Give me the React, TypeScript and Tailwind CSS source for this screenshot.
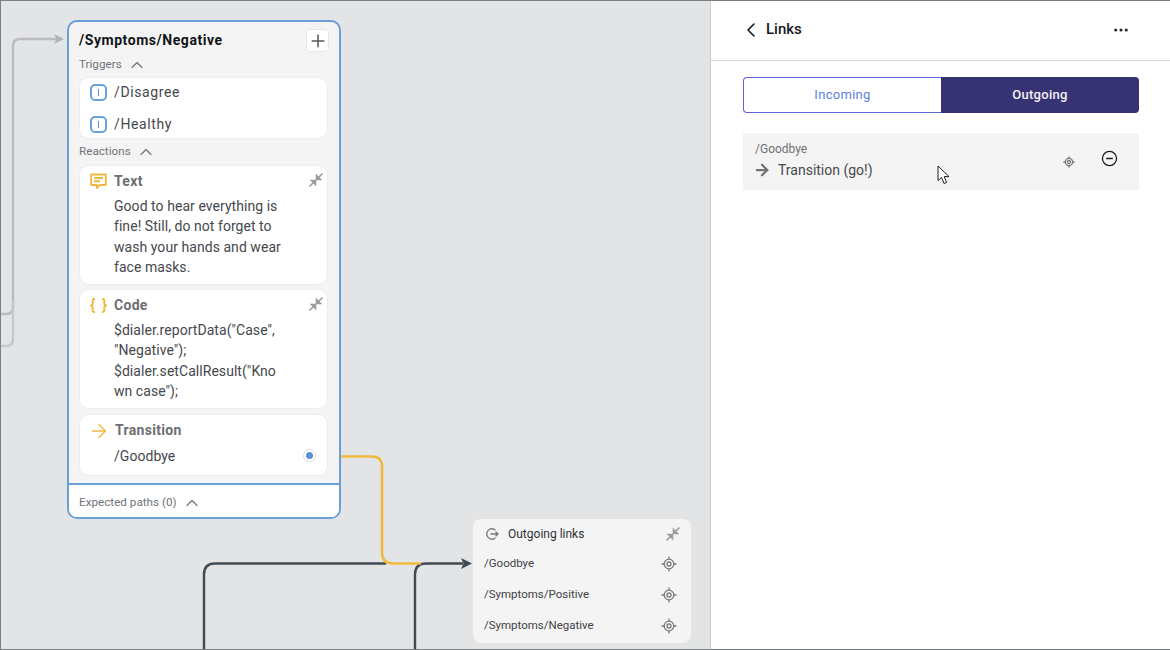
import React from 'react';
import { ChevronUp, Plus, ChevronLeft, MoreHorizontal, ArrowRight, MinusCircle } from 'lucide-react';

const Collapse = () => (
  <svg width="16" height="16" viewBox="0 0 16 16" fill="none" stroke="#9a9da2" strokeWidth="1.6">
    <path d="M1.5 14.5L6.5 9.5M9.5 6.5L14.5 1.5" />
    <path d="M3.5 8.5H7.5V12.5Z" fill="#9a9da2" />
    <path d="M8.5 3.5V7.5H12.5Z" fill="#9a9da2" />
  </svg>
);

const Target = ({ size = 16, color = '#6f7276', stroke = 1.3 }: { size?: number; color?: string; stroke?: number }) => (
  <svg width={size} height={size} viewBox="0 0 16 16" fill="none" stroke={color} strokeWidth={stroke}>
    <circle cx="8" cy="8" r="4.8" />
    <circle cx="8" cy="8" r="2" />
    <path d="M8 0.5V3.2M8 12.8V15.5M0.5 8H3.2M12.8 8H15.5" />
  </svg>
);

const TriggerRow = ({ label }: { label: string }) => (
  <div className="flex h-[32px] items-center gap-[7px] pl-[10px]">
    <div className="flex h-[17px] w-[17px] items-center justify-center rounded-[5px] border-2 border-[#6a9fd8]">
      <div className="h-[7px] w-px bg-[#5b93d1]" />
    </div>
    <span className="text-[14px] tracking-[0.6px] text-[#45484d]">{label}</span>
  </div>
);

const SectionLabel = ({ label }: { label: string }) => (
  <div className="flex items-center gap-[5px] pl-[10px] text-[11.7px] text-[#70747a]">
    <span>{label}</span>
    <ChevronUp size={20} strokeWidth={1.4} className="text-[#70747a]" />
  </div>
);

const ReactionCard = ({ icon, title, lines }: { icon: React.ReactNode; title: string; lines: string[] }) => (
  <div className="relative mx-[10px] mr-[11px] h-[120px] rounded-[10px] border border-[#ececec] bg-white">
    <div className="absolute left-[10px] top-[7px]">{icon}</div>
    <div className="pl-[34px] pt-[6px] text-[14px] font-bold leading-[18px] tracking-[0.3px] text-[#6b6e73]">{title}</div>
    <div className="absolute right-[3px] top-[6px]"><Collapse /></div>
    <div className="mt-[6px] pl-[34px] text-[14px] leading-[20.3px] tracking-[0.05px] text-[#45484d]">
      {lines.map((l) => <div key={l}>{l}</div>)}
    </div>
  </div>
);

const LinkRow = ({ label }: { label: string }) => (
  <div className="flex h-[31px] items-center justify-between pl-[11px] pr-[14px] text-[11.5px] text-[#3f4246]">
    <span>{label}</span>
    <Target size={16} color="#777a7e" />
  </div>
);

const StateCard = () => (
  <div className="absolute left-[66px] top-[19px] flex h-[499px] w-[274px] flex-col overflow-hidden rounded-[10px] border-2 border-[#6a9fd8] bg-[#f4f4f4]">
    <div className="flex h-[30px] shrink-0 items-start justify-between pl-[10px] pr-[10px] pt-[7px]">
      <span className="text-[14px] font-bold leading-[22px] tracking-[0.55px] text-[#111418]">/Symptoms/Negative</span>
      <div className="flex h-[23px] w-[23px] items-center justify-center rounded-[4px] border border-[#e6e6e6] bg-white">
        <Plus size={20} strokeWidth={1.8} className="text-[#55585c]" />
      </div>
    </div>
    <div className="mt-[3px] h-[18px]"><SectionLabel label="Triggers" /></div>
    <div className="ml-[10px] mr-[11px] mt-[4px] h-[62px] rounded-[10px] border border-[#ececec] bg-white">
      <div className="-mt-[2px]">
        <TriggerRow label="/Disagree" />
        <TriggerRow label="/Healthy" />
      </div>
    </div>
    <div className="mt-[3px] h-[18px]"><SectionLabel label="Reactions" /></div>
    <div className="mt-[5px] flex flex-col gap-[4px]">
      <ReactionCard
        title="Text"
        lines={['Good to hear everything is', 'fine! Still, do not forget to', 'wash your hands and wear', 'face masks.']}
        icon={
          <svg width="17" height="17" viewBox="0 0 17 17" fill="none" stroke="#eebb3f" strokeWidth="1.9">
            <path d="M1.2 1.5H15.8V12H9.5L7 15V12H1.2Z" strokeLinejoin="round" />
            <path d="M4 5H13M4 8.3H10" />
          </svg>
        }
      />
      <ReactionCard
        title="Code"
        lines={['$dialer.reportData("Case",', '"Negative");', '$dialer.setCallResult("Kno', 'wn case");']}
        icon={
          <svg width="17" height="17" viewBox="0 0 17 17" fill="none" stroke="#eebb3f" strokeWidth="2">
            <path d="M5 2H4Q2.7 2 2.7 3.4V6.5Q2.7 8 1.2 8.5Q2.7 9 2.7 10.5V13.6Q2.7 15 4 15H5" />
            <path d="M12 2H13Q14.3 2 14.3 3.4V6.5Q14.3 8 15.8 8.5Q14.3 9 14.3 10.5V13.6Q14.3 15 13 15H12" />
          </svg>
        }
      />
      <div className="relative ml-[10px] mr-[11px] mt-[1px] h-[62px] rounded-[10px] border border-[#ececec] bg-white">
        <ArrowRight size={22} strokeWidth={1.6} className="absolute left-[8px] top-[5px] text-[#eebb3f]" />
        <div className="pl-[35px] pt-[6px] text-[14px] font-bold leading-[18px] tracking-[0.3px] text-[#6b6e73]">Transition</div>
        <div className="mt-[7px] pl-[34px] text-[14px] leading-[20px] tracking-[0.05px] text-[#45484d]">/Goodbye</div>
        <div className="absolute right-[11px] top-[34px] flex h-[13px] w-[13px] items-center justify-center rounded-full border border-[#dcdcdc]">
          <div className="h-[7px] w-[7px] rounded-full bg-[#5b93d1]" />
        </div>
      </div>
    </div>
    <div className="mt-[7px] flex-1 border-t-2 border-[#6a9fd8] bg-white">
      <div className="pt-[8px]"><SectionLabel label="Expected paths (0)" /></div>
    </div>
  </div>
);

const Edges = () => (
  <svg className="absolute inset-0" width="710" height="650" fill="none">
    <path d="M0 313H5Q12 313 12 306V45Q12 38 19 38H56" stroke="#b9bbbe" strokeWidth="2.4" />
    <path d="M0 345H5Q12 345 12 338V300" stroke="#c6c8ca" strokeWidth="2.4" />
    <path d="M53 33L63 38L53 43L55.5 38Z" fill="#b0b2b5" />
    <path d="M203 650V573.5Q203 562.5 214 562.5H385" stroke="#424a52" strokeWidth="2.4" />
    <path d="M414 650V573.5Q414 562.5 425 562.5H462" stroke="#424a52" strokeWidth="2.4" />
    <path d="M460 557L471 562.5L460 568L462.5 562.5Z" fill="#424a52" />
    <path d="M339 455.5H371Q381 455.5 381 465.5V551.5Q381 562.5 392 562.5H420" stroke="#eebb3f" strokeWidth="2.6" />
  </svg>
);

const OutgoingLinks = () => (
  <div className="absolute left-[472px] top-[518px] h-[124px] w-[218px] rounded-[8px] bg-[#f4f4f4]">
    <div className="flex h-[29px] items-center pl-[12px] pr-[10px] text-[12px] text-[#2e3135]">
      <svg width="14" height="14" viewBox="0 0 14 14" fill="none" stroke="#77797d" strokeWidth="1.4" className="mr-[9px]">
        <path d="M10.5 3.2A5.2 5.2 0 1 0 10.5 10.8" />
        <path d="M5.5 7H13M10.6 4.8L13 7L10.6 9.2" />
      </svg>
      <span className="flex-1">Outgoing links</span>
      <Collapse />
    </div>
    <LinkRow label="/Goodbye" />
    <LinkRow label="/Symptoms/Positive" />
    <LinkRow label="/Symptoms/Negative" />
  </div>
);

const Sidebar = () => (
  <div className="flex w-[460px] shrink-0 flex-col border-l border-[#c9cbce] bg-white">
    <div className="flex h-[60px] shrink-0 items-center justify-between border-b border-[#d9d9d9] pb-[2px] pl-[28px] pr-[40px]">
      <div className="flex items-center gap-[3px]">
        <ChevronLeft size={24} strokeWidth={1.6} className="text-[#17191c]" />
        <span className="text-[15px] font-medium text-[#17191c]">Links</span>
      </div>
      <MoreHorizontal size={18} strokeWidth={2.2} className="text-[#26282b]" />
    </div>
    <div className="ml-[32px] mr-[31px] mt-[16px] flex h-[36px]">
      <div className="flex flex-1 items-center justify-center rounded-l-[4px] border border-r-0 border-[#5f63d6] bg-white text-[13px] tracking-[0.3px] text-[#5b7fdc]">Incoming</div>
      <div className="flex w-[198px] items-center justify-center rounded-r-[4px] bg-[#373373] text-[13px] font-medium tracking-[0.3px] text-[#f3f3f6]">Outgoing</div>
    </div>
    <div className="relative ml-[32px] mr-[31px] mt-[20px] flex h-[57px] items-start bg-[#f4f4f4] pl-[12px] pr-[21px]">
      <div className="flex-1 pt-[8px]">
        <div className="text-[12px] leading-[16px] text-[#6f7276]">/Goodbye</div>
        <div className="mt-[3px] flex items-center gap-[7px]">
          <ArrowRight size={18} strokeWidth={3} className="-ml-[2px] text-[#6f7276]" />
          <span className="text-[14px] leading-[20px] text-[#45484d]">Transition (go!)</span>
        </div>
      </div>
      <div className="mr-[26px] mt-[23px]"><Target size={12} color="#77797d" stroke={1.7} /></div>
      <MinusCircle size={17} strokeWidth={1.8} className="mt-[17px] text-[#17191c]" />
      {/* mouse pointer */}
      <svg className="absolute left-[194px] top-[32px]" width="14" height="21" viewBox="0 0 14 21" fill="white" stroke="#1c1c1c" strokeWidth="1">
        <path d="M1 1V15.5L4.6 12.4L7 18.5L9.6 17.4L7.2 11.6H12Z" />
      </svg>
    </div>
  </div>
);

export default function App() {
  return (
    <div className="flex h-[650px] w-[1170px] overflow-hidden border-y border-l border-[#7c7f84] font-['Roboto',sans-serif]">
      <div className="relative flex-1 overflow-hidden bg-[#e3e4e6]">
        <Edges />
        <StateCard />
        <OutgoingLinks />
      </div>
      <Sidebar />
    </div>
  );
}
